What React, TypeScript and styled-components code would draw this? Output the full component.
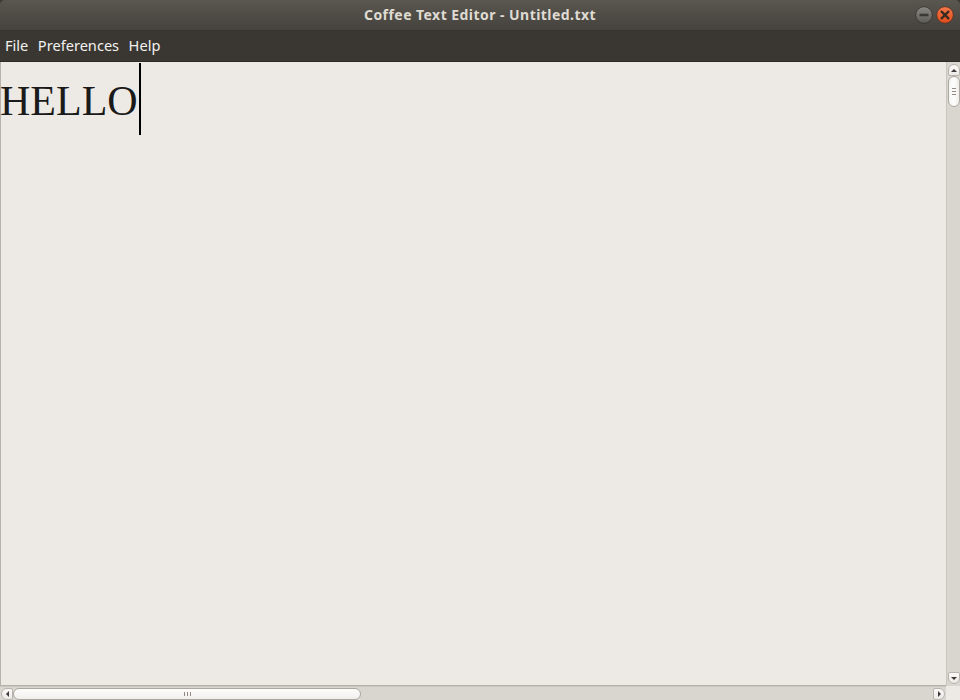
import React from "react";
import styled, { createGlobalStyle } from "styled-components";

const Global = createGlobalStyle`
  html, body { margin: 0; padding: 0; background: #3c3b37; }
  body { width: 960px; height: 700px; overflow: hidden; }
  #root { width: 960px; height: 700px; }
`;

const Window = styled.div`
  width: 960px;
  height: 700px;
  display: flex;
  flex-direction: column;
  background: #3c3b37;
  font-family: "Noto Sans", "DejaVu Sans", sans-serif;
`;

const TitleBar = styled.div`
  height: 30px;
  flex: none;
  position: relative;
  display: flex;
  align-items: center;
  justify-content: center;
  background: linear-gradient(#5a5650, #45433e);
  border-top-left-radius: 5px;
  border-top-right-radius: 5px;
  border-bottom: 1px solid #34332f;
`;

const Title = styled.span`
  color: #dfdbd2;
  font-size: 14px;
  font-weight: 700;
  letter-spacing: 0.45px;
  margin-top: -2px;
`;

const Controls = styled.div`
  position: absolute;
  right: 6px;
  top: 6px;
  display: flex;
  gap: 3px;
`;

const MenuBar = styled.div`
  height: 30px;
  flex: none;
  display: flex;
  align-items: center;
  gap: 9.5px;
  padding: 0 5px;
  background: #3a3732;
  border-bottom: 1px solid #2c2b28;
`;

const MenuItem = styled.span`
  color: #f2f1ef;
  font-size: 14.6px;
  margin-top: -2px;
`;

const Body = styled.div`
  flex: 1;
  display: grid;
  grid-template-columns: 1fr 14px;
  grid-template-rows: 1fr 14px;
  background: #edeae5;
  min-height: 0;
`;

const Editor = styled.div`
  border-left: 1px solid #b6b2ab;
  border-bottom: 1px solid #b6b2ab;
  background: #edeae5;
  position: relative;
  padding-top: 12px;
`;

const Text = styled.span`
  font-family: "Liberation Serif", "Times New Roman", serif;
  font-size: 42px;
  color: #1a1a1a;
  line-height: 54px;
  margin-left: -1px;
  display: inline-block;
`;

const Caret = styled.span`
  position: absolute;
  left: 138px;
  top: 1px;
  width: 2px;
  height: 72px;
  background: #000;
`;

const VTrack = styled.div`
  background: #d9d6d0;
  border-left: 1px solid #c9c5bf;
  display: flex;
  flex-direction: column;
  align-items: center;
  padding: 2px 0;
  box-sizing: border-box;
`;

const HTrack = styled.div`
  background: #d9d6d0;
  border-top: 1px solid #c9c5bf;
  display: flex;
  align-items: center;
  padding: 0 1px;
  box-sizing: border-box;
`;

const Corner = styled.div`
  background: #edeae5;
`;

const ArrowBtn = styled.div<{ $dir: "up" | "down" | "left" | "right" }>`
  width: 12px;
  height: 12px;
  flex: none;
  box-sizing: border-box;
  background: linear-gradient(#fbfaf9, #ebe9e6);
  border: 1px solid #b8b4ad;
  border-radius: ${(p) =>
    p.$dir === "up"
      ? "6px 6px 2px 2px"
      : p.$dir === "down"
      ? "2px 2px 6px 6px"
      : p.$dir === "left"
      ? "6px 2px 2px 6px"
      : "2px 6px 6px 2px"};
  display: flex;
  align-items: center;
  justify-content: center;
`;

const VThumb = styled.div`
  margin-top: 0;
  width: 12px;
  height: 31px;
  box-sizing: border-box;
  border: 1px solid #aca8a1;
  border-radius: 6px;
  background: linear-gradient(90deg, #f6f5f3, #fdfdfc 50%, #efedea);
  display: flex;
  flex-direction: column;
  align-items: center;
  justify-content: center;
  gap: 2px;
`;

const HThumb = styled.div`
  margin-left: 0;
  width: 348px;
  height: 12px;
  box-sizing: border-box;
  border: 1px solid #aca8a1;
  border-radius: 6px;
  background: linear-gradient(#fdfdfc, #f1efec);
  display: flex;
  align-items: center;
  justify-content: center;
  gap: 2px;
`;

const Spacer = styled.div`
  flex: 1;
`;

const GripV = styled.span`
  width: 4px;
  height: 1px;
  background: #8f8b85;
`;

const GripH = styled.span`
  width: 1px;
  height: 4px;
  background: #8f8b85;
`;

const Tri = ({ dir }: { dir: "up" | "down" | "left" | "right" }) => {
  const pts =
    dir === "up"
      ? "0,4 3,1 6,4"
      : dir === "down"
      ? "0,1 3,4 6,1"
      : dir === "left"
      ? "4,0 1,3 4,6"
      : "1,0 4,3 1,6";
  const w = dir === "up" || dir === "down" ? 6 : 5;
  const h = dir === "up" || dir === "down" ? 5 : 6;
  return (
    <svg width={w} height={h} viewBox={`0 0 ${w} ${h}`}>
      <polygon points={pts} fill="#3c3b37" />
    </svg>
  );
};

const MinBtn = () => (
  <svg width="18" height="18" viewBox="0 0 18 18">
    <defs>
      <linearGradient id="mg" x1="0" y1="0" x2="0" y2="1">
        <stop offset="0" stopColor="#8a8882" />
        <stop offset="1" stopColor="#5d5b56" />
      </linearGradient>
    </defs>
    <circle cx="9" cy="9" r="8.3" fill="url(#mg)" stroke="#353430" strokeWidth="0.8" />
    <rect x="4.5" y="7.8" width="9" height="2.4" rx="0.6" fill="#3a3935" />
  </svg>
);

const CloseBtn = () => (
  <svg width="18" height="18" viewBox="0 0 18 18">
    <defs>
      <linearGradient id="cg" x1="0" y1="0" x2="0" y2="1">
        <stop offset="0" stopColor="#f5794a" />
        <stop offset="1" stopColor="#df4c1a" />
      </linearGradient>
    </defs>
    <circle cx="9" cy="9" r="8.3" fill="url(#cg)" stroke="#5a3022" strokeWidth="0.8" />
    <path d="M5.6 5.6 L12.4 12.4 M12.4 5.6 L5.6 12.4" stroke="#3a2a22" strokeWidth="2.3" strokeLinecap="round" />
  </svg>
);

export default function App() {
  return (
    <>
      <Global />
      <Window>
        <TitleBar>
          <Title>Coffee Text Editor - Untitled.txt</Title>
          <Controls>
            <MinBtn />
            <CloseBtn />
          </Controls>
        </TitleBar>
        <MenuBar>
          <MenuItem>File</MenuItem>
          <MenuItem>Preferences</MenuItem>
          <MenuItem>Help</MenuItem>
        </MenuBar>
        <Body>
          <Editor>
            <Text>HELLO</Text>
            <Caret />
          </Editor>
          <VTrack>
            <ArrowBtn $dir="up">
              <Tri dir="up" />
            </ArrowBtn>
            <VThumb>
              <GripV />
              <GripV />
              <GripV />
            </VThumb>
            <Spacer />
            <ArrowBtn $dir="down">
              <Tri dir="down" />
            </ArrowBtn>
          </VTrack>
          <HTrack>
            <ArrowBtn $dir="left">
              <Tri dir="left" />
            </ArrowBtn>
            <HThumb>
              <GripH />
              <GripH />
              <GripH />
            </HThumb>
            <Spacer />
            <ArrowBtn $dir="right">
              <Tri dir="right" />
            </ArrowBtn>
          </HTrack>
          <Corner />
        </Body>
      </Window>
    </>
  );
}
